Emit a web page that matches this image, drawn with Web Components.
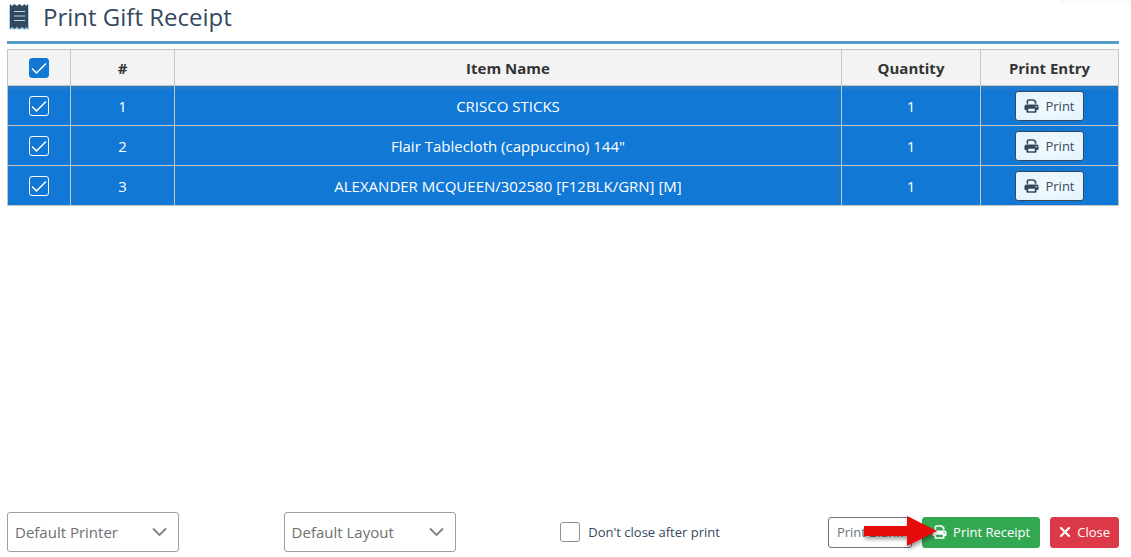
<!DOCTYPE html>
<html lang="en">
<head>
<meta charset="utf-8">
<meta name="viewport" content="width=device-width, initial-scale=1">
<title>Print Gift Receipt</title>
<style>
  body { margin: 0; background: #fff; color: #34495e; font-family: "Segoe UI", "Open Sans", "Noto Sans", sans-serif; font-size: 13px; }
</style>
</head>
<body>
<gift-receipt-dialog>
  <dialog-heading slot="heading">Print Gift Receipt</dialog-heading>
  <receipt-table></receipt-table>
  <dialog-footer slot="footer">
    <drop-down label="Printer" value="Default Printer"></drop-down>
    <drop-down label="Layout" value="Default Layout"></drop-down>
    <check-option>Don't close after print</check-option>
    <button-row>
      <action-button kind="outline">Print Blank</action-button>
      <action-button kind="success" icon="printer">Print Receipt<pointer-arrow slot="marker"></pointer-arrow></action-button>
      <action-button kind="danger" icon="cross">Close</action-button>
    </button-row>
  </dialog-footer>
</gift-receipt-dialog>

<script>
const ICONS = {
  printer: `<svg viewBox="0 0 16 16" aria-hidden="true"><path d="M3.6 5.5V3Q3.600 1.600 5 1.600H10.200L12.400 3.600V5.500" fill="none" stroke="currentColor" stroke-width="1.800"/><path fill="currentColor" fill-rule="evenodd" d="M2.500 6.500h11A2 2 0 0 1 15.500 8.500v3a.8.8 0 0 1-.8.800H13.400v1.900a1.100 1.100 0 0 1-1.100 1.100H3.700a1.100 1.100 0 0 1-1.100-1.100v-1.900H1.300a.8.800 0 0 1-.8-.8v-3a2 2 0 0 1 2-2zM4.500 10.800v2.700h7v-2.700zM13 8a.8.800 0 1 0 0 1.600a.8.800 0 1 0 0-1.600z"/></svg>`,
  cross: `<svg viewBox="0 0 12 16" aria-hidden="true"><path d="M2 4l8 8M10 4l-8 8" fill="none" stroke="currentColor" stroke-width="2.200" stroke-linecap="round"/></svg>`
};

const CHECK_STYLE = `
  input[type=checkbox] { appearance: none; display: block; flex: none; box-sizing: border-box; width: 20px; height: 20px; margin: 0; border: 1px solid #8f8f8f; border-radius: 3px; background: #fff; }
  input[type=checkbox]:checked { border-color: #fff; background: #1178d6 url("data:image/svg+xml,%3Csvg xmlns='http://www.w3.org/2000/svg' viewBox='0 0 18 18'%3E%3Cpath d='M2 9.500l4.500 4.500L16 4.500' fill='none' stroke='white' stroke-width='1.500'/%3E%3C/svg%3E") center / 18px 18px no-repeat; }
`;

function define(name, html, setup) {
  const template = document.createElement('template');
  template.innerHTML = html;
  customElements.define(name, class extends HTMLElement {
    constructor() {
      super();
      this.attachShadow({ mode: 'open' }).append(template.content.cloneNode(true));
    }
    connectedCallback() { if (setup) setup(this, this.shadowRoot); }
  });
}

define('gift-receipt-dialog', `
  <style>
    :host { display: flex; flex-direction: column; box-sizing: border-box; min-height: 100vh; padding: 0 12px 5px 7px; position: relative; }
    :host::before { content: ""; position: absolute; top: 0; right: 0; width: 72px; height: 3px; background: #fafafa; }
    main { flex: 1; padding: 5px 0 16px; }
  </style>
  <slot name="heading"></slot>
  <main><slot></slot></main>
  <slot name="footer"></slot>`);

define('dialog-heading', `
  <style>
    :host { display: block; border-bottom: 3px solid #559cc8; }
    h1 { display: flex; align-items: center; gap: 12px; height: 41px; margin: 0; padding-bottom: 8px; box-sizing: border-box; font-size: 24px; font-weight: 500; line-height: 32px; color: #34495e; }
    svg { width: 24px; height: 26px; }
  </style>
  <h1>
    <svg viewBox="0 0 24 26" aria-hidden="true">
      <path fill="#a9d2ee" d="M2 1l2 1 2-1 3 1 3-1 3 1 3-1 2 1 2-1v25l-2-1-2 1-3-1-3 1-3-1-3 1-2-1-2 1z"/>
      <path fill="#34495e" d="M3 0l2 2 2.500-2 2.500 2 2.500-2 2.500 2 2.500-2 1.500 2 2-2v25l-2-2-1.500 2-2.500-2-2.500 2-2.500-2-2.500 2-2.500-2-2 2z"/>
      <path d="M7 7.500h11M7 12h11M7 16.500h11" stroke="#b5daf2" stroke-width="1.200"/>
    </svg>
    <slot></slot>
  </h1>`);

define('receipt-table', `
  <style>
    ${CHECK_STYLE}
    :host { display: block; }
    table { width: 100%; border-collapse: collapse; table-layout: fixed; text-align: center; font-size: 15px; line-height: 20px; }
    th, td { padding: 0; border: 1px solid #c6c6c6; }
    th { height: 35px; background: #f3f3f3; color: #333; font-weight: 700; }
    td { height: 39px; background: #1178d6; color: #fff; font-weight: 500; }
    tbody tr:first-child td { background: linear-gradient(#2f7fc2, #1178d6 4px); }
    td input[type=checkbox], th input[type=checkbox] { margin: 0 auto; }
    th input[type=checkbox]:checked { border-color: #1178d6; }
    .pick { width: 63px; } .number { width: 104px; } .quantity { width: 139px; } .entry { width: 138px; }
  </style>
  <table>
    <colgroup><col class="pick"><col class="number"><col><col class="quantity"><col class="entry"></colgroup>
    <thead><tr>
      <th scope="col"><input type="checkbox" checked aria-label="Select all"></th>
      <th scope="col">#</th><th scope="col">Item Name</th><th scope="col">Quantity</th><th scope="col">Print Entry</th>
    </tr></thead>
    <tbody></tbody>
  </table>`, (host, root) => {
  const items = ['CRISCO STICKS', 'Flair Tablecloth (cappuccino) 144"', 'ALEXANDER MCQUEEN/302580 [F12BLK/GRN] [M]'];
  root.querySelector('tbody').innerHTML = items.map((name, i) => `
    <tr><td><input type="checkbox" checked aria-label="Select item ${i + 1}"></td>
    <td>${i + 1}</td><td>${name}</td><td>1</td>
    <td><action-button kind="entry" icon="printer">Print</action-button></td></tr>`).join('');
});

define('action-button', `
  <style>
    :host { display: inline-block; position: relative; vertical-align: middle; }
    button { display: flex; align-items: center; gap: 6px; box-sizing: border-box; height: 31px; padding: 0 8px; border: 1px solid; border-radius: 3px; font: inherit; font-size: 13px; font-weight: 400; line-height: 20px; white-space: nowrap; }
    svg { display: block; width: 15px; height: 16px; }
    :host([icon=cross]) svg { width: 12px; }
    :host([kind=entry]) button { height: 30px; color: #34495e; border-color: #34495e; background: radial-gradient(#f5fbff, #e1f2fd); }
    :host([kind=outline]) button { color: #6c757d; border-color: #6c757d; background: #fff; }
    :host([kind=success]) button { padding: 0 9px; color: #fff; border-color: #33a852; background: #33a852; font-weight: 500; }
    :host([kind=danger]) button { color: #fff; border-color: #dc3a49; background: #dc3a49; font-weight: 500; }
  </style>
  <button type="button"><slot></slot></button><slot name="marker"></slot>`, (host, root) => {
  const icon = ICONS[host.getAttribute('icon')];
  if (icon && !root.querySelector('svg')) root.querySelector('button').insertAdjacentHTML('afterbegin', icon);
});

define('pointer-arrow', `
  <style>
    :host { display: block; position: absolute; left: -59px; top: -2px; pointer-events: none; }
    svg { display: block; overflow: visible; filter: drop-shadow(1px 3px 2px rgba(0, 0, 0, .4)); }
  </style>
  <svg width="74" height="32" viewBox="0 0 74 32" aria-hidden="true"><path fill="#e60a0a" d="M1 11H44V1L74 16L44 31V21H1z"/></svg>`);

define('dialog-footer', `
  <style>
    :host { display: grid; grid-template-columns: repeat(3, minmax(0, 100fr)) minmax(0, 102fr); align-items: center; }
  </style>
  <slot></slot>`);

define('button-row', `
  <style>:host { display: flex; justify-content: flex-end; gap: 10px; }</style>
  <slot></slot>`);

define('drop-down', `
  <style>
    :host { display: block; position: relative; width: 172px; }
    select { appearance: none; display: block; box-sizing: border-box; width: 100%; height: 40px; margin: 0; padding: 0 32px 0 7px; border: 1px solid #a0a0a0; border-radius: 3px; background: #fff; color: #6f6f6f; font: inherit; font-size: 15px; }
    svg { position: absolute; right: 12px; top: 15px; pointer-events: none; }
  </style>
  <select></select>
  <svg width="15" height="10" viewBox="0 0 15 10" aria-hidden="true"><path d="M1 1.500l6.500 6.500L14 1.500" fill="none" stroke="#808080" stroke-width="1.800"/></svg>`, (host, root) => {
  const select = root.querySelector('select');
  select.setAttribute('aria-label', host.getAttribute('label'));
  select.replaceChildren(new Option(host.getAttribute('value')));
});

define('check-option', `
  <style>
    ${CHECK_STYLE}
    :host { display: block; }
    label { display: flex; align-items: center; gap: 8px; font-size: 13px; line-height: 20px; white-space: nowrap; }
  </style>
  <label><input type="checkbox"><span><slot></slot></span></label>`);
</script>
</body>
</html>
